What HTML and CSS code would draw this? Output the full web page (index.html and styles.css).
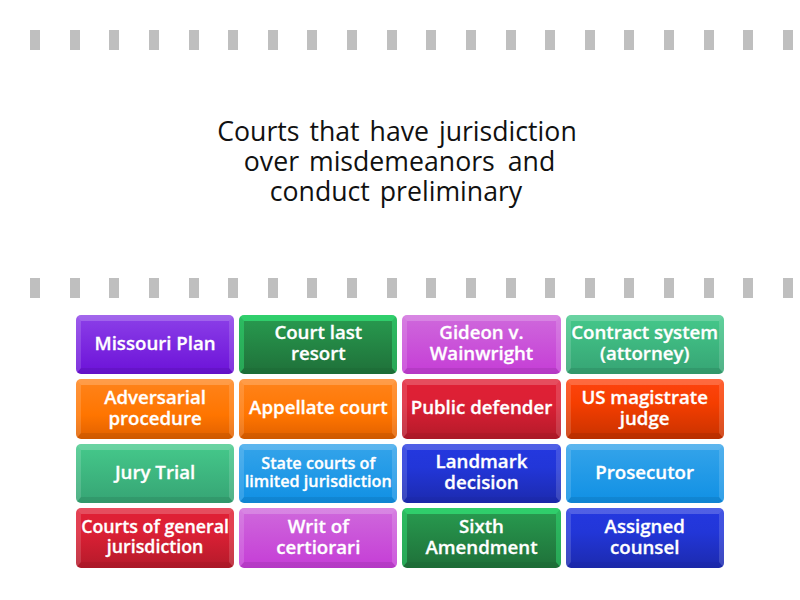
FILE: index.html
```
<!DOCTYPE html>
<html lang="en">
<head>
<meta charset="utf-8">
<title>Find the match</title>
<link rel="stylesheet" href="styles.css">
</head>
<body>
<main class="game">
  <section class="film">
    <div class="ticks"><i></i><i></i><i></i><i></i><i></i><i></i><i></i><i></i><i></i><i></i><i></i><i></i><i></i><i></i><i></i><i></i><i></i><i></i><i></i><i></i></div>
    <h1 class="question">Courts that have jurisdiction<br><span class="second">over misdemeanors</span> <span class="wide">and</span><br><span class="third">conduct preliminary</span></h1>
    <div class="ticks"><i></i><i></i><i></i><i></i><i></i><i></i><i></i><i></i><i></i><i></i><i></i><i></i><i></i><i></i><i></i><i></i><i></i><i></i><i></i><i></i></div>
  </section>
  <section class="answers">
    <button class="tile purple"><span>Missouri Plan</span></button>
    <button class="tile green"><span>Court last<br>resort</span></button>
    <button class="tile pink"><span>Gideon v.<br>Wainwright</span></button>
    <button class="tile mint"><span>Contract system<br>(attorney)</span></button>
    <button class="tile orange"><span>Adversarial<br>procedure</span></button>
    <button class="tile orange"><span>Appellate court</span></button>
    <button class="tile red"><span>Public defender</span></button>
    <button class="tile vermilion"><span>US magistrate<br>judge</span></button>
    <button class="tile mint"><span>Jury Trial</span></button>
    <button class="tile sky small"><span>State courts of<br>limited jurisdiction</span></button>
    <button class="tile blue"><span>Landmark<br>decision</span></button>
    <button class="tile sky"><span>Prosecutor</span></button>
    <button class="tile red medium"><span>Courts of general<br>jurisdiction</span></button>
    <button class="tile pink"><span>Writ of<br>certiorari</span></button>
    <button class="tile green"><span>Sixth<br>Amendment</span></button>
    <button class="tile blue"><span>Assigned<br>counsel</span></button>
  </section>
</main>
</body>
</html>
```
FILE: styles.css
```
* { box-sizing: border-box; }
body {
  margin: 0;
  background: #fff;
  font-family: "Open Sans", sans-serif;
}
.game { width: 800px; height: 600px; overflow: hidden; }
.film {
  height: 315px;
  padding: 30px 7px 17px 30px;
  display: flex;
  flex-direction: column;
  justify-content: space-between;
}
.ticks { display: flex; justify-content: space-between; height: 20px; }
.ticks i { width: 10px; background: #bfbfbf; }
.question {
  margin: 0;
  padding: 0 29px 6px 0;
  text-align: center;
  font-size: 26.67px;
  line-height: 30px;
  font-weight: 400;
  word-spacing: 3px;
  color: #111;
  white-space: nowrap;
}
.second { margin-left: 5px; }
.wide { margin-left: 3px; }
.third { margin-right: 2px; }
.answers {
  width: 647.8px;
  height: 252.8px;
  margin: 0 76px;
  display: grid;
  grid-template-columns: repeat(4, 1fr);
  grid-template-rows: repeat(4, 1fr);
  gap: 5px;
}
.tile {
  --rim: rgba(255, 255, 255, .2);
  --side: rgba(255, 255, 255, .14);
  --foot: rgba(0, 0, 0, .08);
  min-width: 0;
  min-height: 0;
  margin: 0;
  padding: 0;
  display: flex;
  align-items: center;
  justify-content: center;
  border: 5px solid;
  border-width: 6px 5px;
  border-color: var(--rim) var(--side) var(--foot);
  border-radius: 5px;
  background: linear-gradient(var(--top), var(--bottom)) border-box;
  color: #fff;
  font: 600 18.67px/21px "Open Sans", sans-serif;
  -webkit-text-stroke: .3px #fff;
  white-space: nowrap;
}
.tile span { position: relative; top: -2.5px; }
.medium { font-size: 17.8px; line-height: 20px; }
.small { font-size: 16.2px; line-height: 18.5px; }
.small span { top: -1.5px; }
.purple { --top: #8c40e8; --bottom: #6c12d8; }
.green { --top: #289c50; --bottom: #1f7039; --rim: rgba(50, 220, 115, .8); --side: rgba(50, 220, 115, .5); --foot: rgba(0, 0, 0, .04); }
.pink { --top: #cf69dc; --bottom: #c53dd6; }
.mint { --top: #45c98b; --bottom: #36a474; }
.orange { background: linear-gradient(#ff841c, #ff7500 60%, #e06000) border-box; }
.red { background: linear-gradient(#e02035, #dc2035 40%, #b41a2a) border-box; --foot: rgba(0, 0, 0, .05); }
.vermilion { background: linear-gradient(#ff4410, #f53e00 40%, #c83200) border-box; }
.sky { --top: #35a4ea; --bottom: #1090e4; }
.blue { background: linear-gradient(#2438e0, #2236d8 40%, #1c2aae) border-box; --foot: rgba(0, 0, 0, .03); }
```
